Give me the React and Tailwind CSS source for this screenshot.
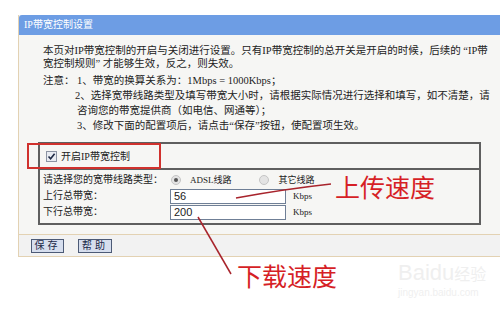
import React from "react";

const Checkbox = () => (
  <svg width="11" height="11" viewBox="0 0 11 11">
    <rect x="0.5" y="0.5" width="10" height="10" fill="#e9ecf2" stroke="#8c94a3" />
    <path d="M2.5 5.5 L4.6 7.8 L8.6 2.8" fill="none" stroke="#1f2a44" strokeWidth="1.6" />
  </svg>
);

const Radio = ({ checked }) => (
  <svg width="10" height="10" viewBox="0 0 10 10">
    <circle cx="5" cy="5" r="4.5" fill="#e4e4e4" stroke="#c4c4c4" />
    {checked && <circle cx="5" cy="5" r="2" fill="#555" />}
  </svg>
);

export default function App() {
  return (
    <div className="relative w-[500px] h-[310px] overflow-hidden bg-white pt-[15px] pl-[18px] font-['Liberation_Serif','Noto_Sans_CJK_SC',serif] text-[#222]">
      <div className="w-[520px] border border-t-0 border-r-0 border-[#e3d2b3] bg-[#f6f6f4]">
        <div className="h-[20px] rounded-tl-[3px] bg-[#6d9de4] pl-[5px] text-[10px] leading-[20px] text-white">
          IP带宽控制设置
        </div>

        <div className="pl-[24px] pt-[9px] text-[10.5px] leading-[13px] whitespace-nowrap">
          <p>本页对IP带宽控制的开启与关闭进行设置。只有IP带宽控制的总开关是开启的时候，后续的 “IP带</p>
          <p>宽控制规则” 才能够生效，反之，则失效。</p>
        </div>
        <div className="pl-[24px] mt-[3px] text-[10.5px] leading-[15px] whitespace-nowrap">
          <p>注意： 1、带宽的换算关系为：1Mbps = 1000Kbps；</p>
          <p className="pl-[32px]">2、选择宽带线路类型及填写带宽大小时，请根据实际情况进行选择和填写，如不清楚，请</p>
          <p className="pl-[34px]">咨询您的带宽提供商（如电信、网通等）；</p>
          <p className="pl-[34px]">3、修改下面的配置项后，请点击“保存”按钮，使配置项生效。</p>
        </div>

        <div className="ml-[19px] mt-[9px] w-[443px] border-2 border-[#5f5f5f] text-[10px]">
          <div className="h-[24px] flex items-center pl-[6px] gap-[4px]">
            <Checkbox />
            <span>开启IP带宽控制</span>
          </div>
          <div className="border-t-2 border-[#5f5f5f] pt-[2px] pb-[3px] pl-[3px] leading-[16px] whitespace-nowrap">
            <div className="flex items-center h-[16px]">
              <span className="w-[127px]">请选择您的宽带线路类型：</span>
              <span className="ml-[1px]"><Radio checked /></span>
              <span className="ml-[9px] text-[9px]">ADSL线路</span>
              <span className="ml-[27px]"><Radio /></span>
              <span className="ml-[10px] text-[9px]">其它线路</span>
            </div>
            <div className="flex items-center h-[16px]">
              <span className="w-[127px]">上行总带宽：</span>
              <div className="w-[116px] h-[15px] border border-[#6f7f96] bg-white pl-[3px] text-[11px] leading-[13px] font-['Liberation_Sans',sans-serif]">
                56
              </div>
              <span className="ml-[7px] text-[9px]">Kbps</span>
            </div>
            <div className="flex items-center h-[16px]">
              <span className="w-[127px]">下行总带宽：</span>
              <div className="w-[116px] h-[15px] border border-[#6f7f96] bg-white pl-[3px] text-[11px] leading-[13px] font-['Liberation_Sans',sans-serif]">
                200
              </div>
              <span className="ml-[7px] text-[9px]">Kbps</span>
            </div>
          </div>
        </div>

        <div className="mt-[9px] h-[22px] border-t border-[#e3d2b3] bg-[#f2f2f2] flex items-center gap-[14px] pl-[12px]">
          <button className="w-[33px] h-[14px] border border-[#4c5a76] bg-[#d6deee] text-[10px] leading-[12px] tracking-[3px] text-[#1b2848]">
            保存
          </button>
          <button className="w-[34px] h-[14px] border border-[#4c5a76] bg-[#d6deee] text-[10px] leading-[12px] tracking-[3px] text-[#1b2848]">
            帮助
          </button>
        </div>
      </div>

      {/* red highlight over the checkbox row */}
      <div className="absolute left-[27px] top-[143px] w-[134px] h-[26px] border-2 border-[#d0312d]" />

      {/* annotation arrows */}
      <svg className="absolute left-0 top-0 pointer-events-none" width="500" height="310">
        <path d="M236 198 Q285 189 331 184" fill="none" stroke="#a8242c" strokeWidth="1.5" />
        <path d="M198 217 L231 274" fill="none" stroke="#a8242c" strokeWidth="1.5" />
      </svg>
      <div className="absolute left-[335px] top-[174px] text-[25px] leading-none text-[#d61f26] font-['Noto_Sans_CJK_SC',sans-serif]">
        上传速度
      </div>
      <div className="absolute left-[237px] top-[263px] text-[25px] leading-none text-[#d61f26] font-['Noto_Sans_CJK_SC',sans-serif]">
        下载速度
      </div>

      {/* faint watermark */}
      <div className="absolute left-[398px] top-[262px] text-[#efefef] font-['Liberation_Sans','Noto_Sans_CJK_SC',sans-serif] leading-none">
        <div className="text-[22px]">Baidu<span className="text-[16px]">经验</span></div>
        <div className="text-[10px] mt-[4px]">jingyan.baidu.com</div>
      </div>
    </div>
  );
}
